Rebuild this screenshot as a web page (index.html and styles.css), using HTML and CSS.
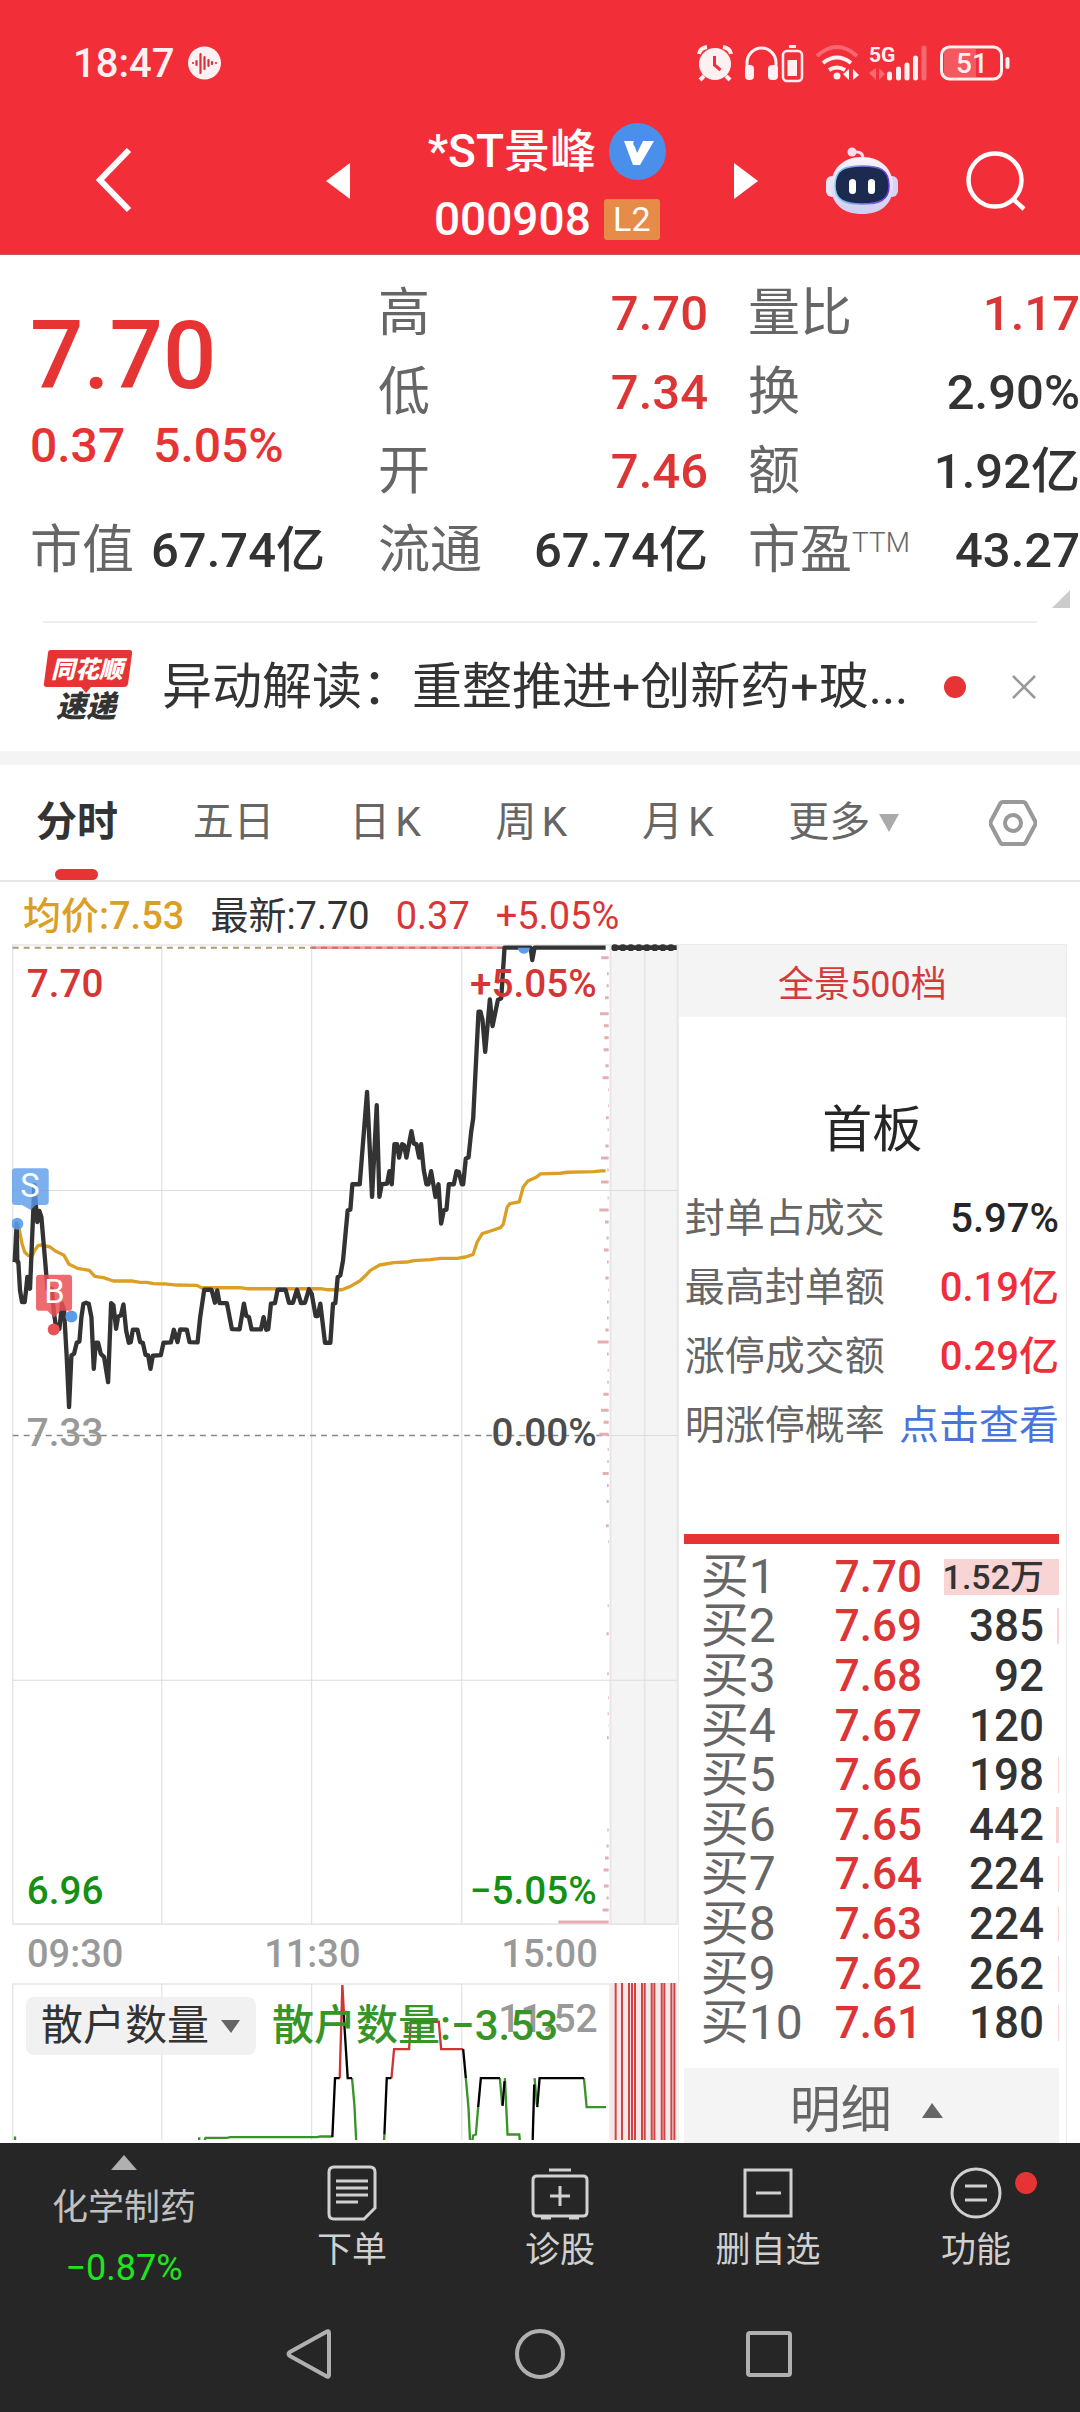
FILE: index.html
```
<!DOCTYPE html>
<html lang="zh-CN">
<head>
    <meta charset="UTF-8">
    <meta name="viewport" content="width=device-width, initial-scale=1.0">
    <title>*ST景峰 000908</title>
    <link rel="stylesheet" href="styles.css">
</head>
<body>
    <header>
        <div class="status-bar">
            <span class="clock">18:47</span>
            <svg class="voice" width="33" height="34" viewBox="0 0 33 34">
                <circle cx="16.500" cy="17" r="16.500" fill="#fff1f2"/>
                <path d="M5 17v0M8.500 15v4M12.500 8v19M16.500 11v12M20.500 14v6M24 16v2M28 17v0" stroke="#d9303a" stroke-width="2.200" stroke-linecap="round"/>
            </svg>
            <svg class="status-icons" width="316" height="40" viewBox="696 43 316 40" fill="none" stroke="#fff1f2">
                <!-- alarm -->
                <circle cx="715" cy="64" r="16" fill="#fff1f2" stroke="none"/>
                <path d="M699 54q1-6 8-7M731 54q-1-6-8-7M704 76l-4 4M726 76l4 4" stroke-width="4"/>
                <path d="M714.500 56v9l6 5" stroke="#f22f38" stroke-width="3"/>
                <!-- headphones -->
                <path d="M747 73v-10a14.500 15 0 0 1 29 0v10" stroke-width="3"/>
                <rect x="745" y="65" width="9" height="15" rx="4" fill="#fff1f2" stroke="none"/>
                <rect x="768" y="65" width="10" height="15" rx="4" fill="#fff1f2" stroke="none"/>
                <rect x="783" y="51" width="19" height="30" rx="4" stroke-width="2.500"/>
                <path d="M789 46.500h7" stroke-width="3"/>
                <rect x="787.500" y="60" width="9.500" height="16" fill="#fff1f2" stroke="none"/>
                <!-- wifi -->
                <path d="M817 56q20-18 40 0" stroke-width="4" opacity=".3"/>
                <path d="M823 63q14-11 28 0M829 70q8-5 16 0" stroke-width="4"/>
                <circle cx="837" cy="76" r="3.500" fill="#fff1f2" stroke="none"/>
                <path d="M849 69v11l-6-6M853 80v-11l6 6" fill="#fff1f2" stroke="none"/>
                <!-- signal -->
                <text x="869" y="62" font-size="21" font-weight="700" fill="#fff1f2" stroke="none">5G</text>
                <path d="M876 68v12l-7-7M879 80v-12l6 6" fill="#fff1f2" stroke="none" opacity=".3"/>
                <path d="M889.500 74v4M898.500 69v9M907 65v13M915.500 58v20" stroke-width="5" stroke-linecap="round"/>
                <path d="M924 48v30" stroke-width="5" stroke-linecap="round" opacity=".3"/>
                <!-- battery -->
                <rect x="944" y="49" width="32" height="28" fill="#fff1f2" stroke="none" opacity=".22"/>
                <rect x="941.500" y="47" width="60" height="32" rx="8" stroke-width="3"/>
                <path d="M1007.500 59v8" stroke-width="4" stroke-linecap="round"/>
                <text x="956" y="73" font-size="28" font-weight="500" fill="#fff1f2" stroke="none">51</text>
            </svg>
        </div>
        <div class="title-bar">
            <button class="icon-btn back" aria-label="返回">
                <svg width="36" height="66" viewBox="0 0 36 66"><path d="M33 2L4 32l29 30" fill="none" stroke="#fff" stroke-width="6"/></svg>
            </button>
            <button class="icon-btn prev" aria-label="上一只">
                <svg width="24" height="36" viewBox="0 0 24 36"><path d="M24 0v36L0 18z" fill="#fff"/></svg>
            </button>
            <div class="stock">
                <div class="stock-row">
                    <h1>*ST景峰</h1>
                    <svg width="57" height="57" viewBox="0 0 57 57">
                        <circle cx="28.500" cy="28.500" r="28.500" fill="#4a90ea"/>
                        <path d="M15 18h10q-2 3 1 6l2 6 6-12h11L31 42h-7z" fill="#fff"/>
                    </svg>
                </div>
                <div class="stock-row code">
                    <span>000908</span>
                    <span class="level">L2</span>
                </div>
            </div>
            <button class="icon-btn" aria-label="下一只">
                <svg width="24" height="36" viewBox="0 0 24 36"><path d="M0 0v36l24-18z" fill="#fff"/></svg>
            </button>
            <button class="icon-btn" aria-label="智能助手">
                <svg width="72" height="68" viewBox="0 0 72 68">
                    <defs>
                        <linearGradient id="shell" x1="0" y1="0" x2="0" y2="1">
                            <stop offset="0" stop-color="#fbf4fb"/>
                            <stop offset="1" stop-color="#cfcdf2"/>
                        </linearGradient>
                        <linearGradient id="rim" x1="0" y1="0" x2="1" y2="0">
                            <stop offset="0" stop-color="#7fd3f0"/>
                            <stop offset="1" stop-color="#6a35d8"/>
                        </linearGradient>
                    </defs>
                    <path d="M37 12q0-8-8-7" fill="none" stroke="#f0dcea" stroke-width="3"/>
                    <circle cx="26" cy="5" r="4.500" fill="#f3dfee"/>
                    <rect x="0" y="29" width="12" height="21" rx="6" fill="#e9e4f8"/>
                    <rect x="60" y="29" width="12" height="21" rx="6" fill="#d6d3f4"/>
                    <path d="M36 10c20 0 31 13 31 29 0 18-12 28-31 28S5 57 5 39c0-16 11-29 31-29z" fill="url(#shell)"/>
                    <path d="M36 19c17 0 27 3 27 20 0 14-9 18-27 18S9 53 9 39c0-17 10-20 27-20z" fill="#1c2a50" stroke="url(#rim)" stroke-width="1.500"/>
                    <rect x="23" y="32" width="7" height="15" rx="3.500" fill="#fff"/>
                    <rect x="42" y="32" width="7" height="15" rx="3.500" fill="#fff"/>
                </svg>
            </button>
            <button class="icon-btn" aria-label="搜索">
                <svg width="60" height="60" viewBox="0 0 60 60" fill="none" stroke="#fff" stroke-width="4.500"><circle cx="29" cy="29" r="26.500"/><path d="M47 48l11 10"/></svg>
            </button>
        </div>
    </header>

    <section class="quote">
        <div class="price">
            <div class="last">7.70</div>
            <div class="change"><span>0.37</span><span>5.05%</span></div>
        </div>
        <dl class="stat"><dt>高</dt><dd class="up">7.70</dd></dl>
        <dl class="stat"><dt>量比</dt><dd class="up">1.17</dd></dl>
        <dl class="stat"><dt>低</dt><dd class="up">7.34</dd></dl>
        <dl class="stat"><dt>换</dt><dd>2.90%</dd></dl>
        <dl class="stat"><dt>开</dt><dd class="up">7.46</dd></dl>
        <dl class="stat"><dt>额</dt><dd>1.92亿</dd></dl>
        <dl class="stat value"><dt>市值</dt><dd>67.74亿</dd></dl>
        <dl class="stat"><dt>流通</dt><dd>67.74亿</dd></dl>
        <dl class="stat"><dt>市盈<sup>TTM</sup></dt><dd>43.27</dd></dl>
    </section>
    <div class="expand"><svg width="18" height="18" viewBox="0 0 18 18"><path d="M18 0v18H0z" fill="#ccc"/></svg></div>

    <section class="news">
        <svg class="news-logo" width="90" height="78" viewBox="0 0 90 78">
            <path d="M8 2h78q4 0 3 4l-4 30q-1 3-4 3H48l-5 6-5-6H4q-4 0-3-4L5 5q0-3 3-3z" fill="#e63333"/>
            <text x="44" y="30" text-anchor="middle" font-size="24" font-weight="900" font-style="italic" fill="#fff">同花顺</text>
            <text x="43" y="69" text-anchor="middle" font-size="30" font-weight="900" font-style="italic" fill="#333">速递</text>
        </svg>
        <a class="news-title" href="#">异动解读：重整推进+创新药+玻...</a>
        <i class="dot"></i>
        <button class="icon-btn" aria-label="关闭">
            <svg width="26" height="26" viewBox="0 0 26 26"><path d="M2 2l22 22M24 2L2 24" stroke="#999" stroke-width="2.500"/></svg>
        </button>
    </section>

    <nav class="tabs">
        <button class="tab active">分时</button>
        <button class="tab">五日</button>
        <button class="tab">日<span>K</span></button>
        <button class="tab">周<span>K</span></button>
        <button class="tab">月<span>K</span></button>
        <button class="tab">更多<svg width="22" height="20" viewBox="0 0 22 20"><path d="M1 1h20L11 19z" fill="#aaa"/></svg></button>
        <button class="icon-btn settings" aria-label="设置">
            <svg width="48" height="48" viewBox="0 0 48 48" fill="none" stroke="#999" stroke-width="4"><path d="M14 3h20q2 0 3 2l9 17q1 2 0 4l-9 17q-1 2-3 2H14q-2 0-3-2L2 26q-1-2 0-4l9-17q1-2 3-2z"/><circle cx="24" cy="24" r="8"/></svg>
        </button>
    </nav>

    <div class="summary">
        <span class="avg">均价:7.53</span>
        <span>最新:7.70</span>
        <span class="up">0.37</span>
        <span class="up">+5.05%</span>
    </div>

    <main>
        <section class="chart">
            <svg class="plot" viewBox="36 12 1995 2940">
                <!-- after-hours band and grid -->
                <path d="M1826 15h204v2934h-204z" fill="#f4f4f4"/>
                <path d="M1830 15v2934M1932 15v2934" stroke="#e8e8e8" stroke-width="6"/>
                <path d="M38 15h1992v2934H38z" fill="none" stroke="#e6e6e6" stroke-width="5"/>
                <path d="M485 15v2934M934 15v2934M1384 15v2934M38 751h1992M38 2218h1992M1826 1485h204" stroke="#dcdcdc" stroke-width="3"/>
                <path d="M38 1485h1786" stroke="#888" stroke-width="5" stroke-dasharray="18 15"/>
                <path d="M38 23h1474" stroke="#b39a70" stroke-width="6" stroke-dasharray="18 15"/>
                <path d="M934 23h578" stroke="#e05050" stroke-opacity=".55" stroke-width="8"/>

                <!-- volume by price -->
                <path d="M1824 53h-22m22 48h-5m5 36h-6m6 36h-11m11 48h-26m26 36h-14m14 36h-13m13 36h-15m15 48h-10m10 36h-18m18 36h-2m2 48h-2m2 36h-8m8 36h-3m3 48h-10m10 36h-23m23 36h-4m4 36h-23m23 48h-3m3 36h-28m28 36h-11m11 48h-6m6 36h-14m14 36h-5m5 48h-10m10 36h-2m2 36h-5m5 48h-5m5 36h-10m10 36h-33m33 36h-5m5 48h-3m3 36h-4m4 36h-16m16 48h-23m23 36h-15m15 36h-28m28 46h-3m3 36h-4m4 36h-18m18 36h-5m5 48h-6m6 72h-8m8 48h-2m2 192h-3m3 84h-6m6 120h-4m4 72h-2m2 48h-3m3 36h-1m1 36h-5m5 276h-4m4 48h-6m6 36h-11m11 36h-15m15 48h-14m14 36h-6m6 36h-18m18 36h-151" fill="none" stroke="#e5aeb1" stroke-width="9"/>

                <polyline class="avg-line" points="54,850 60,880 66,910 74,935 84,945 96,948 104,930 114,916 124,914 150,920 166,932 192,945 207,972 232,984 268,990 284,1008 310,1012 340,1022 398,1022 420,1026 440,1026 460,1030 500,1031 530,1034 590,1035 604,1042 720,1042 740,1045 960,1045 980,1048 1025,1048 1050,1038 1078,1022 1094,1007 1110,990 1138,974 1180,967 1220,965 1240,961 1290,958 1320,954 1370,954 1395,950 1418,942 1430,905 1445,880 1470,872 1500,862 1508,852 1520,800 1528,790 1556,785 1568,740 1582,722 1605,712 1620,701 1680,699 1700,696 1780,694 1800,692 1815,692"/>
                <polyline class="price-line" points="44,965 50,850 52,965 55,965 60,1050 66,1085 74,1085 78,1050 82,1010 90,1045 96,900 103,735 108,800 112,845 118,812 124,830 130,900 136,970 142,1045 155,1045 162,1120 168,1160 178,1165 186,1090 192,1110 200,1250 207,1400 214,1245 222,1240 230,1207 238,1203 244,1130 250,1090 258,1087 266,1090 274,1130 281,1285 287,1207 294,1207 302,1240 312,1250 324,1325 333,1088 340,1095 348,1165 354,1128 362,1125 370,1092 378,1170 386,1207 392,1205 398,1168 412,1168 420,1205 428,1207 436,1243 444,1245 451,1285 458,1246 482,1244 490,1207 512,1206 521,1168 532,1205 540,1167 560,1168 568,1205 592,1206 600,1130 612,1048 634,1048 644,1087 651,1050 658,1088 680,1088 695,1166 718,1167 731,1090 738,1126 746,1130 754,1167 782,1167 790,1130 798,1168 804,1166 812,1090 824,1088 832,1048 856,1048 866,1087 878,1087 890,1048 902,1088 914,1087 926,1046 934,1060 946,1127 952,1127 960,1090 974,1207 990,1207 998,1090 1005,1088 1012,1010 1020,1005 1028,960 1042,810 1050,808 1056,732 1078,732 1100,455 1115,770 1129,495 1137,770 1144,732 1160,730 1167,693 1174,732 1182,612 1190,612 1196,652 1205,612 1211,615 1218,652 1233,573 1240,610 1248,612 1256,652 1262,612 1270,690 1278,732 1284,732 1292,693 1305,770 1314,732 1322,850 1330,810 1338,808 1345,732 1360,732 1368,693 1375,695 1384,732 1388,732 1396,655 1404,652 1412,575 1418,535 1434,215 1440,215 1446,240 1454,335 1468,178 1476,258 1492,180 1502,175 1512,23 1590,23 1595,60 1602,23 1815,23"/>
                <path d="M1842 23h186" stroke="#333" stroke-width="14"/>
                <path d="M1842 23h186" stroke="#333" stroke-width="20" stroke-linecap="round" stroke-dasharray="1 23"/>

                <!-- price labels -->
                <g class="labels">
                    <text x="80" y="171" fill="#d53535">7.70</text>
                    <text x="1788" y="171" fill="#d53535" text-anchor="end">+5.05%</text>
                    <text x="80" y="1515" fill="#999">7.33</text>
                    <text x="1788" y="1515" fill="#4d4d4d" text-anchor="end">0.00%</text>
                    <text x="80" y="2888" fill="#149114">6.96</text>
                    <text x="1788" y="2888" fill="#149114" text-anchor="end">−5.05%</text>
                </g>

                <!-- trade marks -->
                <g fill="#5a9bea">
                    <path d="M46 684h90q10 0 10 10v90q0 10-10 10h-28l-16 15-26-15H46q-10 0-10-10v-90q0-10 10-10z" opacity=".8"/>
                    <circle cx="52" cy="850" r="18" opacity=".9"/>
                    <circle cx="214" cy="1128" r="18"/>
                    <path d="M1552 23h36a18 18 0 0 1-36 0z"/>
                </g>
                <g fill="#ea5155">
                    <path d="M118 1003h88q10 0 10 10v88q0 10-10 10h-24l-20 20-20-20h-24q-10 0-10-10v-88q0-10 10-10z" opacity=".85"/>
                    <circle cx="161" cy="1167" r="18"/>
                </g>
                <g class="marks">
                    <text x="90" y="770">S</text>
                    <text x="163" y="1089">B</text>
                </g>
            </svg>
            <div class="axis"><span>09:30</span><span>11:30</span><span>15:00</span></div>
            <div class="sub">
                <svg class="plot" viewBox="36 36 1995 471">
                    <path d="M1826 36h204v483h-204z" fill="#f6e8e8"/>
                    <path d="M38 38v481M36 39h1790" stroke="#e6e6e6" stroke-width="5"/>
                    <path d="M485 38v481M934 38v481M1384 38v481" stroke="#dcdcdc" stroke-width="3"/>
                    <path d="M1845 36v483M1864 36v483M1885 36v483M1894 36v483M1903 36v483M1924 36v483M1932 36v483M1953 36v483M1961 36v483M1983 36v483M1991 36v483M2012 36v483M2021 36v483" stroke="#cf4444" stroke-width="6"/>
                    <g fill="none" stroke-width="7">
                        <path stroke="#379427" d="M45 496v15M597 498v13M612 511l4-11h64l10-2h260l10-2h36M1055 321l7 79 6 119M1150 519l2-29M1396 321l8 89 5 109h5l4-26 8-3 7-82M1498 321l7 80M1513 321l8 169h35l3 29M1602 321l7 80M1750 321l8 87h58"/>
                        <path stroke="#d03535" d="M1018 321l8-279 5 90M1173 321l8-87h45l5-82h84l7 82h66"/>
                        <path stroke="#000" d="M996 498l8-177h14M1030 130l12 191h13M1152 490l7-169h14M1388 234l8 87M1433 408l8-87h57M1506 404l6-74M1596 519l5-179M1610 408l7-87h133"/>
                    </g>
                </svg>
                <div class="sub-head">
                    <button class="picker">散户数量<svg width="19" height="13" viewBox="0 0 19 13"><path d="M0 0h19l-9 13z" fill="#666"/></svg></button>
                    <span class="reading">散户数量:−3.53</span>
                </div>
                <span class="sub-max">11.52</span>
            </div>
        </section>

        <aside>
            <button class="depth">全景500档</button>
            <h2>首板</h2>
            <dl class="facts">
                <dt>封单占成交</dt><dd>5.97%</dd>
                <dt>最高封单额</dt><dd class="hot">0.19亿</dd>
                <dt>涨停成交额</dt><dd class="hot">0.29亿</dd>
                <dt>明涨停概率</dt><dd><a href="#">点击查看</a></dd>
            </dl>
            <table class="bids">
                <tr style="--bar: 115px"><th>买1</th><td>7.70</td><td class="small">1.52万</td></tr>
                <tr style="--bar: 2px"><th>买2</th><td>7.69</td><td>385</td></tr>
                <tr style="--bar: 0px"><th>买3</th><td>7.68</td><td>92</td></tr>
                <tr style="--bar: 0px"><th>买4</th><td>7.67</td><td>120</td></tr>
                <tr style="--bar: 1px"><th>买5</th><td>7.66</td><td>198</td></tr>
                <tr style="--bar: 3px"><th>买6</th><td>7.65</td><td>442</td></tr>
                <tr style="--bar: 1px"><th>买7</th><td>7.64</td><td>224</td></tr>
                <tr style="--bar: 1px"><th>买8</th><td>7.63</td><td>224</td></tr>
                <tr style="--bar: 1px"><th>买9</th><td>7.62</td><td>262</td></tr>
                <tr style="--bar: 1px"><th>买10</th><td>7.61</td><td>180</td></tr>
            </table>
            <button class="detail">明细<svg width="21" height="15" viewBox="0 0 21 15"><path d="M0 15h21L10 0z" fill="#666"/></svg></button>
        </aside>
    </main>

    <footer>
        <nav class="toolbar">
            <a class="sector" href="#">
                <svg width="26" height="15" viewBox="0 0 26 15"><path d="M0 15h26L13 0z" fill="#b0b0b0"/></svg>
                <span>化学制药</span>
                <span class="down">−0.87%</span>
            </a>
            <button class="tool">
                <svg width="56" height="56" viewBox="0 0 56 56"><path d="M10 2h36q5 0 5 5v36L40 54H10q-5 0-5-5V7q0-5 5-5zM12 16h32M12 23h32M12 30h32M12 37h22"/></svg>
                <span>下单</span>
            </button>
            <button class="tool">
                <svg width="60" height="56" viewBox="0 0 60 56"><path d="M7 11h46q4 0 4 4v32q0 4-4 4H7q-4 0-4-4V15q0-4 4-4zM19 5h22M30 21v20M20 31h20M11 53h10M39 53h10"/></svg>
                <span>诊股</span>
            </button>
            <button class="tool">
                <svg width="56" height="56" viewBox="0 0 56 56"><path d="M5 5h46v46H5zM16 28h25"/></svg>
                <span>删自选</span>
            </button>
            <button class="tool badge">
                <svg width="56" height="56" viewBox="0 0 56 56"><circle cx="28" cy="28" r="24"/><path d="M17 21h22M17 35h22"/></svg>
                <span>功能</span>
            </button>
        </nav>
        <div class="system-nav">
            <button class="icon-btn" aria-label="返回">
                <svg width="50" height="52" viewBox="0 0 50 52"><path d="M44 5v42q0 3-3 1L5 28q-3-2 0-4L41 4q3-2 3 1z"/></svg>
            </button>
            <button class="icon-btn" aria-label="主屏幕">
                <svg width="50" height="52" viewBox="0 0 50 52"><circle cx="25" cy="26" r="23"/></svg>
            </button>
            <button class="icon-btn" aria-label="最近任务">
                <svg width="50" height="52" viewBox="0 0 50 52"><rect x="3" y="5" width="42" height="42" rx="2"/></svg>
            </button>
        </div>
    </footer>
</body>
</html>
```
FILE: styles.css
```
* {
    margin: 0;
    padding: 0;
    box-sizing: border-box;
}

body {
    font-family: Roboto, "Noto Sans CJK SC", sans-serif;
    background-color: #fff;
    color: #333;
    display: flex;
    flex-direction: column;
    min-height: 100vh;
}

button {
    font: inherit;
    color: inherit;
    background: none;
    border: none;
    cursor: pointer;
}

a {
    color: inherit;
    text-decoration: none;
}

svg {
    display: block;
    flex-shrink: 0;
}

.up {
    color: #dc3535;
}

/* header */
header {
    background: #f22f38;
    color: #fff;
    height: 255px;
    border-bottom: 1px solid #c9565c;
}

.status-bar {
    display: flex;
    align-items: center;
    padding: 43px 68px 0 73px;
    height: 83px;
}

.clock {
    font-size: 40px;
    font-weight: 500;
    color: #fff1f2;
}

.voice {
    margin-left: 14px;
}

.status-icons {
    margin-left: auto;
}

.title-bar {
    display: flex;
    align-items: center;
    gap: 68px;
    padding: 30px 54px 0 96px;
}

.back {
    margin-right: auto;
}

.prev {
    margin-right: 10px;
}

.stock-row {
    display: flex;
    align-items: center;
    justify-content: space-between;
    gap: 13px;
    height: 76px;
}

.stock h1 {
    font-size: 46px;
    font-weight: 500;
    line-height: 60px;
}

.stock .code {
    justify-content: center;
    font-size: 46px;
    font-weight: 500;
    height: 60px;
}

.level {
    width: 56px;
    height: 41px;
    border-radius: 3px;
    background: #e78b49;
    font-size: 34px;
    font-weight: 400;
    line-height: 41px;
    text-align: center;
}

/* quote */
.quote {
    display: grid;
    grid-template-columns: 308fr 330fr 332fr;
    grid-auto-rows: 79px;
    column-gap: 40px;
    padding: 19px 0 0 30px;
}

.price {
    grid-row: span 3;
    color: #e63333;
    font-weight: 500;
}

.last {
    font-size: 94px;
    line-height: 120px;
    padding-top: 22px;
}

.change {
    display: flex;
    gap: 28px;
    font-size: 48px;
    line-height: 60px;
}

.stat {
    display: flex;
    align-items: center;
    justify-content: space-between;
    white-space: nowrap;
    line-height: 79px;
}

.stat.value {
    padding-right: 13px;
}

.stat dt {
    font-size: 52px;
    color: #666;
}

.stat dd {
    font-size: 49px;
    font-weight: 500;
}

.stat sup {
    font-size: 28px;
    font-weight: 300;
    line-height: 1;
    vertical-align: 16px;
}

.expand {
    display: flex;
    justify-content: flex-end;
    padding-right: 10px;
    height: 31px;
}

/* news */
.news {
    display: flex;
    align-items: center;
    margin: 0 43px;
    height: 130px;
    border-top: 2px solid #eee;
}

.news-title {
    flex: 1;
    margin: 0 20px 0 29px;
    font-size: 50px;
    line-height: 70px;
    white-space: nowrap;
    overflow: hidden;
    text-overflow: ellipsis;
}

.dot {
    width: 22px;
    height: 22px;
    border-radius: 50%;
    background: #e63333;
    margin-right: 45px;
}

/* tabs */
.tabs {
    display: flex;
    align-items: center;
    justify-content: space-between;
    padding: 0 43px 0 36px;
    height: 131px;
    border-top: 14px solid #f4f4f4;
    border-bottom: 2px solid #e6e6e6;
}

.tab {
    position: relative;
    display: flex;
    align-items: center;
    font-size: 41px;
    line-height: 115px;
    color: #666;
}

.tab span {
    margin-left: 5px;
}

.tab svg {
    margin-left: 8px;
}

.settings {
    margin-left: 14px;
}

.tab.active {
    color: #333;
    font-weight: 700;
}

.tab.active::after {
    content: "";
    position: absolute;
    left: 50%;
    bottom: 0;
    width: 43px;
    height: 11px;
    margin-left: -22px;
    border-radius: 6px;
    background: #e63333;
}

.summary {
    display: flex;
    gap: 26px;
    padding: 0 23px;
    font-size: 38px;
    line-height: 68px;
    height: 62px;
}

.avg {
    color: #dc9f26;
    font-weight: 500;
}

/* chart */
main {
    display: flex;
    align-items: stretch;
    flex: 1;
    padding: 0 13px 0 12px;
}

.chart {
    flex: 667;
    min-width: 0;
}

.plot {
    width: 100%;
    height: auto;
}

.avg-line,
.price-line {
    fill: none;
    stroke: #dc9f26;
    stroke-width: 10;
    stroke-linejoin: round;
}

.price-line {
    stroke: #333;
    stroke-width: 13;
}

.labels {
    font-size: 116px;
    font-weight: 500;
}

.marks {
    fill: #fff;
    font-size: 98px;
    text-anchor: middle;
}

.axis {
    display: flex;
    justify-content: space-between;
    padding: 0 80px 0 15px;
    font-size: 38px;
    font-weight: 500;
    line-height: 58px;
    color: #999;
}

.sub {
    position: relative;
}

.sub-head {
    position: absolute;
    z-index: 1;
    top: 14px;
    left: 14px;
    display: flex;
    align-items: center;
    gap: 16px;
    font-size: 42px;
    line-height: 58px;
    white-space: nowrap;
}

.picker {
    display: flex;
    align-items: center;
    gap: 12px;
    padding: 0 16px 0 15px;
    border-radius: 8px;
    background: rgba(240, 240, 240, 0.9);
}

.reading {
    color: #379427;
    font-weight: 500;
}

.sub-max {
    position: absolute;
    top: 12px;
    right: 80px;
    font-size: 39px;
    font-weight: 500;
    line-height: 48px;
    color: #999;
}

/* order book */
aside {
    flex: 388;
    min-width: 0;
    display: flex;
    flex-direction: column;
    border: solid #ececec;
    border-width: 1px 1px 0;
}

.depth {
    height: 72px;
    padding-right: 20px;
    background: #f4f4f4;
    color: #d13b3b;
    font-size: 36px;
}

aside h2 {
    padding: 78px 0 19px;
    font-size: 50px;
    font-weight: 400;
    line-height: 70px;
    text-align: center;
    color: #262626;
}

.facts {
    display: grid;
    grid-template-columns: auto auto;
    justify-content: space-between;
    padding: 0 7px 0 6px;
    font-size: 40px;
    line-height: 69px;
    white-space: nowrap;
    color: #666;
}

.facts dd {
    text-align: right;
    font-weight: 500;
    color: #262626;
}

.facts .hot {
    color: #f02d3a;
}

.facts a {
    color: #4a74dc;
    font-weight: 400;
}

.bids {
    margin: 74px 7px 0 5px;
    padding-top: 8px;
    height: 514px;
    border-top: 10px solid #e63333;
    border-spacing: 0;
    font-size: 44px;
    line-height: 48px;
    white-space: nowrap;
}

.bids th {
    padding-left: 17px;
    width: 36%;
    font-size: 48px;
    font-weight: 400;
    text-align: left;
    color: #666;
}

.bids td {
    font-weight: 500;
    color: #333;
    text-align: right;
    padding-right: 15px;
    background: linear-gradient(#f8d4d4, #f8d4d4) no-repeat right center / var(--bar) 36px;
}

.bids td:nth-child(2) {
    color: #dc3535;
    background: none;
    text-align: left;
    padding: 0 0 0 16px;
}

.bids .small {
    font-size: 34px;
}

.detail {
    display: flex;
    align-items: center;
    justify-content: center;
    gap: 30px;
    margin: 20px 7px 0 5px;
    padding: 10px 10px 0 0;
    height: 74px;
    flex: 1;
    background: #f4f4f4;
    color: #666;
    font-size: 51px;
    line-height: 64px;
}

/* bottom */
footer {
    background: #262626;
    color: #d0d0d0;
}

.toolbar {
    display: grid;
    grid-template-columns: 248fr 208fr 208fr 208fr 208fr;
    height: 153px;
    font-size: 35px;
}

.sector {
    display: flex;
    flex-direction: column;
    align-items: center;
    padding-top: 12px;
    font-size: 36px;
    line-height: 60px;
    color: #c0c0c0;
}

.sector svg {
    margin-bottom: 8px;
}

.down {
    color: #1ee61e;
}

.tool {
    position: relative;
    display: flex;
    flex-direction: column;
    align-items: center;
    padding-top: 22px;
    line-height: 60px;
}

.tool svg {
    fill: none;
    stroke: #d0d0d0;
    stroke-width: 3;
}

.badge::after {
    content: "";
    position: absolute;
    top: 29px;
    right: 43px;
    width: 22px;
    height: 22px;
    border-radius: 50%;
    background: #e63333;
}

.system-nav {
    display: flex;
    justify-content: center;
    align-items: center;
    gap: 180px;
    height: 116px;
}

.system-nav svg {
    fill: none;
    stroke: #b0b0b0;
    stroke-width: 4;
}
```
